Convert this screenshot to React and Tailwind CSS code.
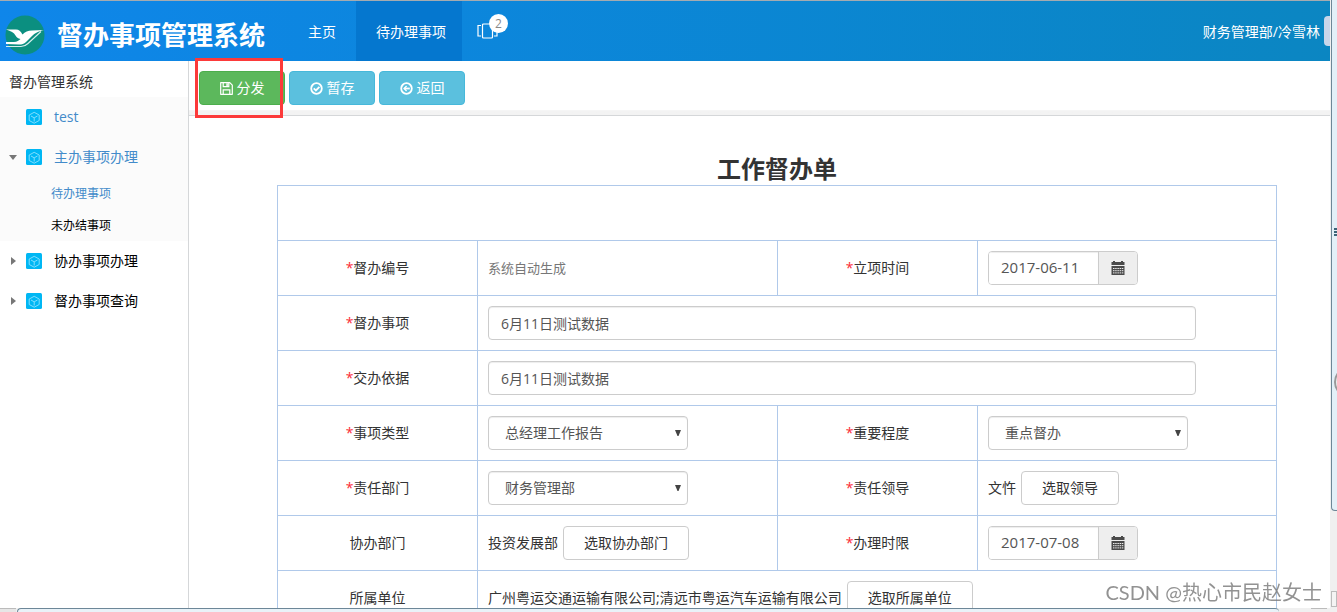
function Logo() {
  return (
    <svg viewBox="0 0 40 40" className="size-10 shrink-0" aria-hidden="true">
      <circle cx="20" cy="20" r="19.5" fill="#0b8f80" />
      <path d="M1 14.500 H11 C14 14.500 15.500 16 17.500 19.500 C20 17 23 15.500 27 15.500 L39 15 C33 16.500 30 18 27 21 L21 27 C19 29 17 29.500 14 29.500 L1 29 V27 H9 C12 27 14 25.500 15.500 24 C13 23.500 11.500 22.500 10.500 20.500 C9 17.500 6 16 1 14.500 Z" fill="#fff" />
      <path d="M1 31.500 H16 C19 31.500 21 30.500 23 28.500 L36 16.500" stroke="#d5efec" strokeWidth="1.100" fill="none" />
    </svg>
  );
}

function Cube() {
  return (
    <svg viewBox="0 0 16 16" className="size-4 shrink-0" aria-hidden="true">
      <rect width="16" height="16" rx="1.5" fill="#00b7f4" />
      <path d="M8.200 3.300 L13.200 6 V11.500 L8.200 14.200 L3.200 11.500 V6 Z M5 7 L8.200 8.800 L11.500 7 M8.200 8.800 V12.500" fill="none" stroke="#8fe2ff" strokeWidth="0.9" />
    </svg>
  );
}

function SaveIcon() {
  return (
    <svg viewBox="0 0 13 13" className="size-[13px]" fill="none" stroke="currentColor" strokeWidth="1.200" aria-hidden="true">
      <path d="M0.700 0.700 H9.800 L12.300 3.200 V12.300 H0.700 Z" strokeLinejoin="round" />
      <path d="M3.200 0.700 V4.600 H8.800 V0.700 M3.200 12.300 V7.800 H9.800 V12.300" />
      <path d="M7.100 1.200 V4" strokeWidth="1.500" />
    </svg>
  );
}

function CheckIcon() {
  return (
    <svg viewBox="0 0 13 13" className="size-[13px]" fill="none" stroke="currentColor" strokeWidth="1.800" aria-hidden="true">
      <circle cx="6.500" cy="6.500" r="5.300" />
      <path d="M3.700 6.300 L5.900 8.400 L9.400 4.800" />
    </svg>
  );
}

function BackIcon() {
  return (
    <svg viewBox="0 0 13 13" className="size-[13px]" fill="none" stroke="currentColor" strokeWidth="1.800" aria-hidden="true">
      <circle cx="6.500" cy="6.500" r="5.300" />
      <path d="M9.800 6.500 H4.500" />
      <path d="M6.600 4 L4.100 6.500 L6.600 9" strokeWidth="1.400" />
    </svg>
  );
}

function Calendar() {
  return (
    <svg viewBox="0 0 14 14" className="size-3.5" aria-hidden="true">
      <path d="M0.5 1 H2 V0 H4 V1 H10 V0 H12 V1 H13.5 V4 H0.5 Z M0.500 5 H13.5 V14 H0.5 Z" fill="#4a4a4a" />
      <path d="M2 7.500 H12.500 M2 9.700 H12.500 M2 11.900 H12.500" stroke="#eee" strokeWidth="1" strokeDasharray="1.500 0.700" />
    </svg>
  );
}

function NavItem({ label, open, active }) {
  return (
    <a href="#" className={"flex h-10 items-center text-sm " + (active ? "text-[#428bca]" : "text-black")}>
      <span className="flex w-[26px] justify-center">
        {open === true && (
          <svg viewBox="0 0 8 5" className="w-2" aria-hidden="true"><path d="M0 0 H8 L4 5 Z" fill="#777" /></svg>
        )}
        {open === false && (
          <svg viewBox="0 0 5 8" className="h-2" aria-hidden="true"><path d="M0 0 V8 L5 4 Z" fill="#777" /></svg>
        )}
      </span>
      <Cube />
      <span className="ml-3">{label}</span>
    </a>
  );
}

function Label({ children, required, htmlFor }) {
  return (
    <th scope="row" className="border border-[#b0c9ea] p-0 text-center font-normal">
      <label htmlFor={htmlFor}>
        {required && <span className="text-red-500">*</span>}
        {children}
      </label>
    </th>
  );
}

function Cell({ children, colSpan }) {
  return (
    <td colSpan={colSpan} className="border border-[#b0c9ea] px-2.5 py-0">
      <div className="flex items-center whitespace-nowrap">{children}</div>
    </td>
  );
}

function DateField({ id, value }) {
  return (
    <div className="flex h-[34px] w-[150px] overflow-hidden rounded border border-[#ccc]">
      <input id={id} defaultValue={value} className="w-[109px] bg-white px-3 text-[15px] text-[#555] shadow-[inset_0_1px_1px_rgba(0,0,0,0.075)]" />
      <button aria-label="选择日期" className="flex flex-1 items-center justify-center border-l border-[#ccc] bg-[#eee]"><Calendar /></button>
    </div>
  );
}

function TextField({ id, value }) {
  return (
    <input id={id} defaultValue={value} className="h-[34px] w-[708px] rounded border border-[#ccc] bg-white px-3 text-[#555] shadow-[inset_0_1px_1px_rgba(0,0,0,0.075)]" />
  );
}

function SelectField({ id, value }) {
  return (
    <div className="relative">
      <select id={id} className="h-[34px] w-[200px] appearance-none rounded border border-[#ccc] bg-white px-4 text-[#555] shadow-[inset_0_1px_1px_rgba(0,0,0,0.075)]">
        <option>{value}</option>
      </select>
      <svg viewBox="0 0 6 6" className="pointer-events-none absolute top-3.5 right-[7px] size-1.5" aria-hidden="true">
        <path d="M0 0 H6 L3.500 6 H2.500 Z" fill="#444" />
      </svg>
    </div>
  );
}

function PickButton({ children }) {
  return <button className="ml-[5px] h-[34px] rounded border border-[#ccc] bg-white px-5 text-[#333]">{children}</button>;
}

function Action({ icon: Icon, children, green }) {
  return (
    <button className={"flex h-[34px] w-[86px] items-center justify-center gap-1 rounded border text-sm text-white " + (green ? "border-[#4cae4c] bg-[#5cb85c]" : "border-[#46b8da] bg-[#5bc0de]")}>
      <Icon />
      {children}
    </button>
  );
}

export default function App() {
  return (
    <div className="flex h-screen flex-col overflow-hidden bg-white font-['Open_Sans','Noto_Sans_CJK_SC',sans-serif] text-sm text-[#333]">
      <div className="flex min-h-0 flex-1">
        <div className="flex min-w-0 flex-1 flex-col">
          <header className="flex h-[61px] shrink-0 items-center border-t border-[#a5abb0] bg-linear-to-r from-[#0f86ea] to-[#0b86c2] text-white">
            <div className="flex items-center pt-2 pl-[5px]">
              <Logo />
              <h1 className="ml-3 text-[26px] leading-10 font-bold whitespace-nowrap">督办事项管理系统</h1>
            </div>
            <nav className="ml-[23px] flex h-full">
              <a href="#" className="flex items-center px-5 pt-0.5">主页</a>
              <a href="#" className="flex items-center bg-[#0577cf] pt-0.5 pr-4 pl-5">待办理事项</a>
              <a href="#" aria-label="待办" className="relative flex items-center px-[15px]">
                <svg viewBox="0 0 21 16" className="w-[21px]" fill="none" stroke="#fff" strokeWidth="1.200" aria-hidden="true">
                  <rect x="5.500" y="1" width="10" height="14" rx="1" />
                  <path d="M4 2.500 H1 V13 H4 M17 2.500 H20 V13 H17" />
                </svg>
                <span className="absolute top-[13px] left-[27px] flex size-[19px] items-center justify-center rounded-full bg-white text-xs text-[#888]">2</span>
              </a>
            </nav>
            <span className="ml-auto pt-0.5 whitespace-nowrap">财务管理部/冷雪林</span>
            <span className="ml-1 h-[30px] w-1.5 rounded-l bg-[#c9d6ea]" />
          </header>

          <div className="flex min-h-0 flex-1">
            <aside className="w-[189px] shrink-0 border-r border-[#d5d7d9]">
              <h2 className="h-9 pt-[3px] pl-[9px] leading-9">督办管理系统</h2>
              <nav>
                <div className="bg-[#fbfbfb]">
                  <NavItem label="test" active />
                  <NavItem label="主办事项办理" open={true} active />
                  <a href="#" className="flex h-8 items-center pt-0.5 pl-[51px] text-xs text-[#428bca]">待办理事项</a>
                  <a href="#" className="flex h-8 items-center pt-0.5 pl-[51px] text-xs text-black">未办结事项</a>
                </div>
                <NavItem label="协办事项办理" open={false} />
                <NavItem label="督办事项查询" open={false} />
              </nav>
            </aside>

            <main className="flex min-w-0 flex-1 flex-col">
              <div className="flex h-[55px] shrink-0 items-start gap-1 border-b border-[#d5d7d9] bg-linear-to-b from-white from-90% to-[#f3f3f3] to-92% pt-2.5 pl-2.5">
                <div className="relative">
                  <Action icon={SaveIcon} green>分发</Action>
                  <span className="pointer-events-none absolute -top-[13px] -left-1 h-[60px] w-[88px] border-3 border-[#fc3a3a]" />
                </div>
                <Action icon={CheckIcon}>暂存</Action>
                <Action icon={BackIcon}>返回</Action>
              </div>
              <div className="min-h-0 flex-1 overflow-hidden pt-9 pr-[53px] pl-[88px]">
                <h2 className="h-[33px] text-center text-2xl leading-[33px] font-bold">工作督办单</h2>
                <table className="w-full table-fixed border-collapse">
                  <colgroup>
                    <col className="w-[200px]" />
                    <col className="w-[300px]" />
                    <col className="w-[200px]" />
                    <col />
                  </colgroup>
                  <tbody>
                    <tr className="h-[55px]"><td colSpan={4} className="border border-[#b0c9ea]" /></tr>
                    <tr className="h-[55px]">
                      <Label required>督办编号</Label>
                      <Cell><span className="text-[13px] text-[#777]">系统自动生成</span></Cell>
                      <Label required htmlFor="start">立项时间</Label>
                      <Cell><DateField id="start" value="2017-06-11" /></Cell>
                    </tr>
                    <tr className="h-[55px]">
                      <Label required htmlFor="item">督办事项</Label>
                      <Cell colSpan={3}><TextField id="item" value="6月11日测试数据" /></Cell>
                    </tr>
                    <tr className="h-[55px]">
                      <Label required htmlFor="basis">交办依据</Label>
                      <Cell colSpan={3}><TextField id="basis" value="6月11日测试数据" /></Cell>
                    </tr>
                    <tr className="h-[55px]">
                      <Label required htmlFor="kind">事项类型</Label>
                      <Cell><SelectField id="kind" value="总经理工作报告" /></Cell>
                      <Label required htmlFor="level">重要程度</Label>
                      <Cell><SelectField id="level" value="重点督办" /></Cell>
                    </tr>
                    <tr className="h-[55px]">
                      <Label required htmlFor="dept">责任部门</Label>
                      <Cell><SelectField id="dept" value="财务管理部" /></Cell>
                      <Label required>责任领导</Label>
                      <Cell>文忤<PickButton>选取领导</PickButton></Cell>
                    </tr>
                    <tr className="h-[55px]">
                      <Label>协办部门</Label>
                      <Cell>投资发展部<PickButton>选取协办部门</PickButton></Cell>
                      <Label required htmlFor="due">办理时限</Label>
                      <Cell><DateField id="due" value="2017-07-08" /></Cell>
                    </tr>
                    <tr className="h-[55px]">
                      <Label>所属单位</Label>
                      <Cell colSpan={3}>广州粤运交通运输有限公司;清远市粤运汽车运输有限公司<PickButton>选取所属单位</PickButton></Cell>
                    </tr>
                  </tbody>
                </table>
              </div>
            </main>
          </div>
        </div>

        <div className="relative flex w-[7px] shrink-0 flex-col overflow-hidden bg-[#f0f0f0] pl-px" aria-hidden="true">
          <div className="h-[511px] shrink-0 rounded-bl-sm border-b border-l border-[#6d8798] bg-[#e3f0f8]" />
          <div className="absolute top-[228px] right-0 flex flex-col gap-px">
            <span className="h-0.5 w-[3px] bg-[#3c6478]" />
            <span className="h-0.5 w-[3px] bg-[#3c6478]" />
            <span className="h-0.5 w-[3px] bg-[#3c6478]" />
          </div>
          <div className="absolute top-[366px] left-1 size-8 rounded-full border-2 border-[#999] bg-[#eee]" />
          <div className="mt-auto mb-px h-4 border border-[#bbb] bg-[#f4f4f4]" />
        </div>
      </div>
      <div className="flex h-1 shrink-0 bg-[#f0f0f0]" aria-hidden="true">
        <span className="w-4 border-t border-[#bbb] bg-[#e6e6e6]" />
        <span className="ml-px w-[1262px] rounded-t-sm border-t border-l border-[#6d8798] bg-[#e9f2f8]" />
        <span className="mr-2.5 ml-auto w-4 border-t border-[#bbb]" />
      </div>
      <p className="pointer-events-none fixed right-[15px] bottom-1.5 font-[Lato,'Noto_Sans_CJK_SC',sans-serif] text-xl leading-7 text-[#777]/80">CSDN @热心市民赵女士</p>
    </div>
  );
}
